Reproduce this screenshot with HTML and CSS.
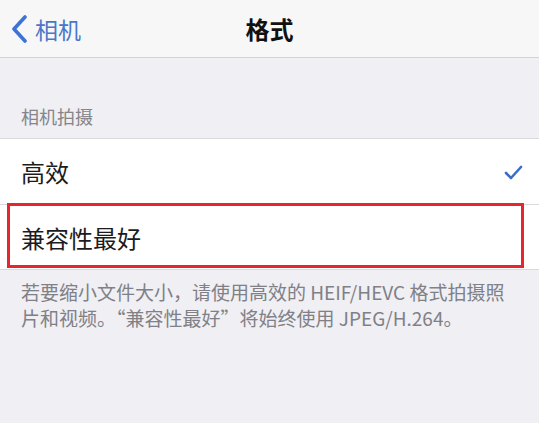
FILE: index.html
```html
<!DOCTYPE html>
<html lang="zh-CN">
<head>
    <meta charset="UTF-8">
    <meta name="viewport" content="width=device-width, initial-scale=1.0">
    <link rel="stylesheet" href="styles.css">
    <title>格式</title>
</head>
<body>
    <div class="navbar">
        <div class="back">
            <svg class="chevron" width="18" height="28" viewBox="0 0 18 28">
                <polyline points="15,2 4,14 15,26" fill="none" stroke="#3d72d6" stroke-width="3.6" stroke-linecap="round" stroke-linejoin="round"/>
            </svg>
            <span>相机</span>
        </div>
        <div class="title">格式</div>
        <div></div>
    </div>

    <div class="sectionHeader">相机拍摄</div>

    <div class="group">
        <div class="row">
            <span>高效</span>
            <svg class="check" width="19" height="15" viewBox="0 0 19 15">
                <polyline points="2,8 7,13 17,2" fill="none" stroke="#3a6cc8" stroke-width="2.6" stroke-linecap="round" stroke-linejoin="round"/>
            </svg>
        </div>
        <div class="row marked">
            <span>兼容性最好</span>
        </div>
    </div>

    <p class="footer">若要缩小文件大小，请使用高效的 HEIF/HEVC 格式拍摄照片和视频。“兼容性最好”将始终使用 JPEG/H.264。</p>
</body>
</html>
```

FILE: styles.css
```css
*{
    box-sizing: border-box;
}
body{
    margin: 0;
    background-color: #efeff4;
    font-family: "Noto Sans CJK SC", "Noto Sans", sans-serif;
    color: #1c1c1e;
}

.navbar{
    height: 58px;
    background-color: #f7f7f8;
    border-bottom: 1px solid #d3d3d7;
    display: grid;
    grid-template-columns: 1fr auto 1fr;
    align-items: center;
}
.back{
    display: flex;
    align-items: center;
    gap: 7px;
    padding-left: 10px;
    font-size: 23px;
    color: #4a77c9;
}
.title{
    font-size: 24px;
    font-weight: bold;
    color: #111;
}

.sectionHeader{
    height: 80px;
    display: flex;
    align-items: flex-end;
    padding: 0 21px 9px;
    font-size: 18px;
    color: #85858a;
}

.group{
    background-color: #fff;
    border-top: 1px solid #dadade;
    border-bottom: 1px solid #dadade;
}
.row{
    height: 65px;
    display: flex;
    align-items: center;
    justify-content: space-between;
    padding: 0 16px 0 21px;
    font-size: 24px;
}
.row + .row{
    border-top: 1px solid #dadade;
}
.check{
    margin-top: 2px;
}

/* recuadro rojo de la anotación */
.marked{
    position: relative;
}
.marked::after{
    content: "";
    position: absolute;
    left: 7px;
    right: 15px;
    top: -2px;
    bottom: 1px;
    border: 3px solid #e8252d;
}

.footer{
    margin: 0;
    padding: 9px 18px 9px 21px;
    font-size: 19px;
    line-height: 26px;
    color: #808086;
}
```
